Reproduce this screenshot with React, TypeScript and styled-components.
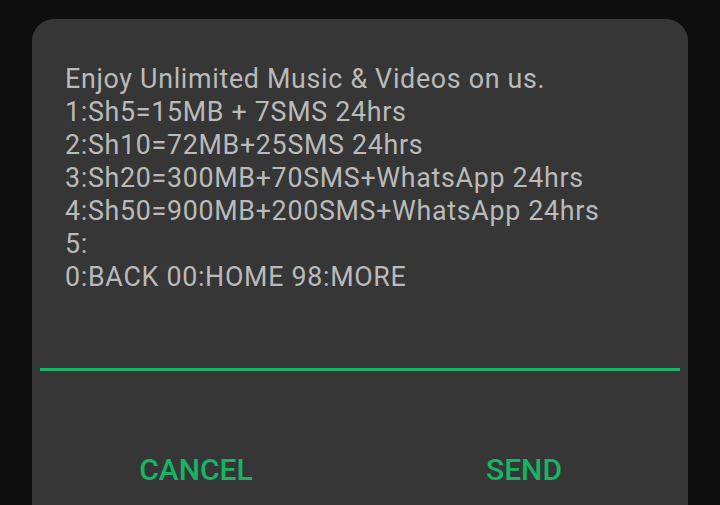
import React from "react";
import styled, { createGlobalStyle } from "styled-components";

const GlobalStyle = createGlobalStyle`
  html, body {
    margin: 0;
    padding: 0;
    background-color: #0e0e0e;
    overflow: hidden;
  }
`;

const Screen = styled.div`
  width: 720px;
  height: 505px;
  padding: 19px 32px 0;
  box-sizing: border-box;
  overflow: hidden;
  font-family: Roboto, "Noto Sans", sans-serif;
`;

const Dialog = styled.div`
  background-color: #363636;
  border-radius: 22px 22px 0 0;
  padding-top: 44px;
  padding-bottom: 60px;
`;

const Message = styled.div`
  padding: 0 33px;
  font-size: 26.8px;
  letter-spacing: 0.7px;
  line-height: 33px;
  color: #bababa;
  white-space: pre-line;
`;

const InputField = styled.div`
  margin: 0 8px;
  height: 74px;
  border-bottom: 3px solid #17b466;
`;

const Actions = styled.div`
  display: flex;
  margin-top: 82px;
`;

const ActionButton = styled.button`
  flex: 1;
  background: none;
  border: none;
  padding: 0;
  font-family: Roboto, "Noto Sans", sans-serif;
  font-size: 30px;
  font-weight: 500;
  line-height: 34px;
  color: #17b466;
  cursor: pointer;
`;

const lines = [
  "Enjoy Unlimited Music & Videos on us.",
  "1:Sh5=15MB + 7SMS 24hrs",
  "2:Sh10=72MB+25SMS 24hrs",
  "3:Sh20=300MB+70SMS+WhatsApp 24hrs",
  "4:Sh50=900MB+200SMS+WhatsApp 24hrs",
  "5:",
  "0:BACK 00:HOME 98:MORE",
];

const App: React.FC = () => {
  return (
    <>
      <GlobalStyle />
      <Screen>
        <Dialog>
          <Message>{lines.join("\n")}</Message>
          <InputField />
          <Actions>
            <ActionButton>CANCEL</ActionButton>
            <ActionButton>SEND</ActionButton>
          </Actions>
        </Dialog>
      </Screen>
    </>
  );
};

export default App;
